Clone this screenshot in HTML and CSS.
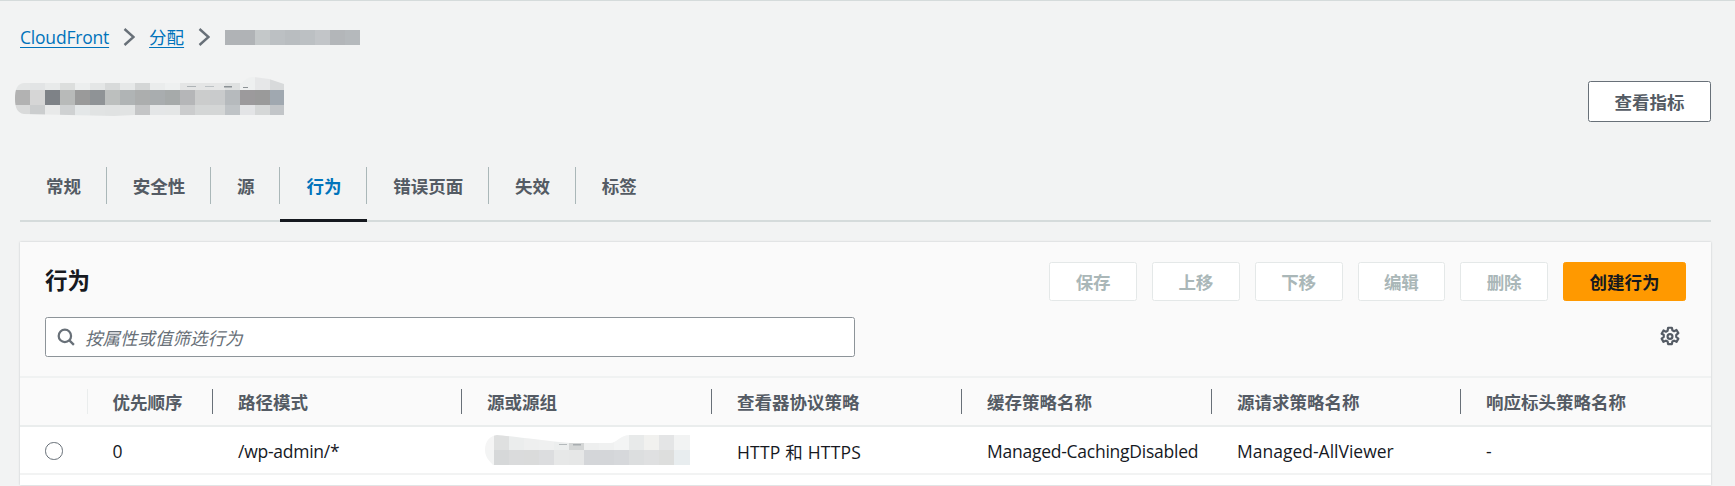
FILE: index.html
```html
<!DOCTYPE html>
<html lang="zh">
<head>
<meta charset="utf-8">
<title>CloudFront 分配</title>
<link rel="stylesheet" href="styles.css">
</head>
<body>
<main class="page">
  <nav class="crumbs">
    <a class="crumb-link crumb-latin" href="#">CloudFront</a>
    <svg class="crumb-sep" viewBox="0 0 12 18"><path d="M1.5 1l9 8-9 8"/></svg>
    <a class="crumb-link" href="#">分配</a>
    <svg class="crumb-sep" viewBox="0 0 12 18"><path d="M1.5 1l9 8-9 8"/></svg>
    <svg class="crumb-mosaic" width="135" height="15" viewBox="0 0 135 15">
      <rect width="15" height="15" x="0" fill="#b0b3b6"/><rect width="15" height="15" x="15" fill="#b0b3b6"/><rect width="15" height="15" x="30" fill="#c4c8c9"/><rect width="15" height="15" x="45" fill="#bcc0c3"/><rect width="15" height="15" x="60" fill="#b9bdc0"/><rect width="15" height="15" x="75" fill="#bcc0c3"/><rect width="15" height="15" x="90" fill="#c2c5c8"/><rect width="15" height="15" x="105" fill="#b3b6b9"/><rect width="15" height="15" x="120" fill="#b5b9bc"/>
    </svg>
  </nav>

  <header class="page-head">
    <svg class="title-mosaic" width="272" height="41" viewBox="0 0 272 41">
      <defs><clipPath id="tm"><path d="M10 6H228C232 1 236 0 240 0L255 2 270 7V38H120L100 39 10 37C3 36 1 30 1 22 1 12 3 7 10 6z"/></clipPath></defs>
      <g clip-path="url(#tm)">
        <g><rect x="1" width="15" height="13" y="0" fill="#e4e6e6"/><rect x="16" width="15" height="13" y="0" fill="#e2e4e5"/><rect x="31" width="15" height="13" y="0" fill="#e8eaea"/><rect x="46" width="15" height="13" y="0" fill="#dcdedd"/><rect x="61" width="15" height="13" y="0" fill="#eceeee"/><rect x="76" width="15" height="13" y="0" fill="#e4e6e6"/><rect x="91" width="15" height="13" y="0" fill="#d8dada"/><rect x="106" width="15" height="13" y="0" fill="#e6e8e8"/><rect x="121" width="15" height="13" y="0" fill="#d4d6d6"/><rect x="136" width="15" height="13" y="0" fill="#eaecec"/><rect x="151" width="15" height="13" y="0" fill="#eef0f0"/><rect x="166" width="15" height="13" y="0" fill="#e4e5e5"/><rect x="181" width="15" height="13" y="0" fill="#e4e5e5"/><rect x="196" width="15" height="13" y="0" fill="#e6e7e7"/><rect x="211" width="15" height="13" y="0" fill="#dfe1e1"/><rect x="226" width="15" height="13" y="0" fill="#eef0f0"/><rect x="241" width="15" height="13" y="0" fill="#e6e7e8"/><rect x="256" width="15" height="13" y="0" fill="#d8dadb"/></g>
        <g><rect x="1" width="15" height="15" y="13" fill="#b2b2b2"/><rect x="16" width="15" height="15" y="13" fill="#d6d6d6"/><rect x="31" width="15" height="15" y="13" fill="#7e8287"/><rect x="46" width="15" height="15" y="13" fill="#b8bab9"/><rect x="61" width="15" height="15" y="13" fill="#9a9a9a"/><rect x="76" width="15" height="15" y="13" fill="#8f9396"/><rect x="91" width="15" height="15" y="13" fill="#bcbfbe"/><rect x="106" width="15" height="15" y="13" fill="#b0b4b5"/><rect x="121" width="15" height="15" y="13" fill="#acaeae"/><rect x="136" width="15" height="15" y="13" fill="#a9adaf"/><rect x="151" width="15" height="15" y="13" fill="#a6aaaa"/><rect x="166" width="15" height="15" y="13" fill="#b5b6b8"/><rect x="181" width="15" height="15" y="13" fill="#cbcccc"/><rect x="196" width="15" height="15" y="13" fill="#c9cbcc"/><rect x="211" width="15" height="15" y="13" fill="#b6babd"/><rect x="226" width="15" height="15" y="13" fill="#9c9a9c"/><rect x="241" width="15" height="15" y="13" fill="#9a9a9a"/><rect x="256" width="15" height="15" y="13" fill="#a0a8b0"/></g>
        <g><rect x="1" width="15" height="13" y="28" fill="#d9dada"/><rect x="16" width="15" height="13" y="28" fill="#cbcdce"/><rect x="31" width="15" height="13" y="28" fill="#e8e9e9"/><rect x="46" width="15" height="13" y="28" fill="#cfd1d2"/><rect x="61" width="15" height="13" y="28" fill="#e4e7e8"/><rect x="76" width="15" height="13" y="28" fill="#e1e3e3"/><rect x="91" width="15" height="13" y="28" fill="#e0e2e2"/><rect x="106" width="15" height="13" y="28" fill="#e1e3e3"/><rect x="121" width="15" height="13" y="28" fill="#c4c5c6"/><rect x="136" width="15" height="13" y="28" fill="#e4e6e7"/><rect x="151" width="15" height="13" y="28" fill="#e4e6e6"/><rect x="166" width="15" height="13" y="28" fill="#cbcccd"/><rect x="181" width="15" height="13" y="28" fill="#d4d6d6"/><rect x="196" width="15" height="13" y="28" fill="#d4d6d6"/><rect x="211" width="15" height="13" y="28" fill="#bfc3c6"/><rect x="226" width="15" height="13" y="28" fill="#e3e4e6"/><rect x="241" width="15" height="13" y="28" fill="#d5d7d7"/><rect x="256" width="15" height="13" y="28" fill="#c2c5c8"/></g>
        <g><rect x="173" y="9" width="9" height="1" fill="#aeb3b6"/><rect x="191" y="9" width="9" height="1" fill="#bcc1c4"/><rect x="210" y="9" width="8" height="1.5" fill="#8c9296"/><rect x="229" y="10" width="5" height="1" fill="#8c9296"/></g>
      </g>
    </svg>
    <button class="btn btn-normal" type="button">查看指标</button>
  </header>

  <div class="tabs">
    <a class="tab" href="#"><span class="tab-label">常规</span></a>
    <a class="tab" href="#"><span class="tab-label">安全性</span></a>
    <a class="tab" href="#"><span class="tab-label">源</span></a>
    <a class="tab tab-active" href="#"><span class="tab-label">行为</span></a>
    <a class="tab" href="#"><span class="tab-label">错误页面</span></a>
    <a class="tab" href="#"><span class="tab-label">失效</span></a>
    <a class="tab tab-last" href="#"><span class="tab-label">标签</span></a>
  </div>

  <section class="card">
    <div class="card-head">
      <div class="card-top">
        <h2 class="card-title">行为</h2>
        <div class="actions">
          <button class="btn btn-disabled" type="button">保存</button>
          <button class="btn btn-disabled" type="button">上移</button>
          <button class="btn btn-disabled" type="button">下移</button>
          <button class="btn btn-disabled" type="button">编辑</button>
          <button class="btn btn-disabled" type="button">删除</button>
          <button class="btn btn-primary" type="button">创建行为</button>
        </div>
      </div>
      <div class="tools">
        <label class="filter">
          <svg class="search-icon" viewBox="0 0 16 16"><circle cx="7" cy="7" r="5.5"/><path d="M11 11l4 4"/></svg>
          <input class="filter-input" type="text" placeholder="按属性或值筛选行为">
        </label>
        <svg class="gear" viewBox="0 0 20 20"><path class="gear-body" d="M8.3 1.6h3.4l.5 2.3 1.5.8 2.2-1.1 1.7 2.9-1.9 1.5v2l1.9 1.5-1.7 2.9-2.2-1.1-1.5.8-.5 2.3H8.3l-.5-2.3-1.5-.8-2.2 1.1-1.7-2.9 1.9-1.5v-2L2.4 7l1.7-2.9 2.2 1.1 1.5-.8z"/><circle class="gear-body" cx="10" cy="9.5" r="2.2"/></svg>
      </div>
    </div>
    <table class="grid">
      <colgroup><col class="c-sel"><col class="c-pri"><col class="c-wide"><col class="c-wide2"><col class="c-wide2"><col class="c-wide2"><col class="c-wide"><col></colgroup>
      <thead>
        <tr>
          <th class="th-sel"><span class="th-inner"></span></th>
          <th><span class="th-inner">优先顺序</span></th>
          <th><span class="th-inner">路径模式</span></th>
          <th><span class="th-inner">源或源组</span></th>
          <th><span class="th-inner">查看器协议策略</span></th>
          <th><span class="th-inner">缓存策略名称</span></th>
          <th><span class="th-inner">源请求策略名称</span></th>
          <th class="th-last"><span class="th-inner">响应标头策略名称</span></th>
        </tr>
      </thead>
      <tbody>
        <tr>
          <td class="td-sel"><span class="radio"></span></td>
          <td>0</td>
          <td class="tight">/wp-admin/*</td>
          <td>
            <svg class="cell-mosaic" width="205" height="30" viewBox="0 0 205 30">
              <defs><clipPath id="cm"><path d="M12 0C25 1 60 6 85 8H125C132 8 135 0 145 0H205V30H8C2 24 0 20 0 15 0 6 5 1 12 0z"/></clipPath></defs>
              <g clip-path="url(#cm)">
                <rect x="0" y="0" width="9" height="15" fill="#f5f5f5"/><rect x="9" y="0" width="15" height="15" fill="#dfe0e0"/><rect x="24" y="0" width="15" height="15" fill="#ebeded"/><rect x="39" y="0" width="15" height="15" fill="#eeefef"/><rect x="54" y="0" width="15" height="15" fill="#eff0f0"/><rect x="69" y="0" width="15" height="15" fill="#eceeee"/><rect x="84" y="0" width="15" height="15" fill="#d4d6d6"/><rect x="99" y="0" width="15" height="15" fill="#eeefef"/><rect x="114" y="0" width="15" height="15" fill="#f0f1f1"/><rect x="129" y="0" width="15" height="15" fill="#f3f4f4"/><rect x="144" y="0" width="15" height="15" fill="#e8eaea"/><rect x="159" y="0" width="15" height="15" fill="#f1f1ef"/><rect x="174" y="0" width="15" height="15" fill="#e4e5e6"/><rect x="189" y="0" width="16" height="15" fill="#f2f3f3"/>
                <rect x="0" y="15" width="9" height="15" fill="#f3f4f4"/><rect x="9" y="15" width="15" height="15" fill="#d6d8d9"/><rect x="24" y="15" width="15" height="15" fill="#dadbdc"/><rect x="39" y="15" width="15" height="15" fill="#dadbdb"/><rect x="54" y="15" width="15" height="15" fill="#dcdddf"/><rect x="69" y="15" width="15" height="15" fill="#e7e8e8"/><rect x="84" y="15" width="15" height="15" fill="#e6e7e7"/><rect x="99" y="15" width="15" height="15" fill="#d4d6d9"/><rect x="114" y="15" width="15" height="15" fill="#d4d6d9"/><rect x="129" y="15" width="15" height="15" fill="#d6d8db"/><rect x="144" y="15" width="15" height="15" fill="#dcdedf"/><rect x="159" y="15" width="15" height="15" fill="#dfe0e1"/><rect x="174" y="15" width="15" height="15" fill="#dddedd"/><rect x="189" y="15" width="16" height="15" fill="#e8edef"/>
                <rect x="74" y="9" width="8" height="1" fill="#b4b9bb"/><rect x="88" y="9" width="8" height="1.5" fill="#a8adb0"/>
              </g>
            </svg>
          </td>
          <td class="wide">HTTP 和 HTTPS</td>
          <td class="tight">Managed-CachingDisabled</td>
          <td>Managed-AllViewer</td>
          <td>-</td>
        </tr>
      </tbody>
    </table>
  </section>
</main>
</body>
</html>
```
FILE: styles.css
```css
* { box-sizing: border-box; }
html, body { margin: 0; height: 486px; overflow: hidden; }
body {
  background: #f2f3f3;
  color: #16191f;
  font-family: "Open Sans", "Noto Sans CJK SC", sans-serif;
  font-size: 17.5px;
  border-top: 1px solid #d5dbdb;
}
.page { padding: 0 24px 0 20px; }

.crumbs { display: flex; align-items: center; height: 24px; margin-top: 24px; gap: 14px; }
.crumb-link { color: #0073bb; text-decoration: underline; text-decoration-thickness: 1px; text-underline-offset: 3px; line-height: 24px; }
.crumb-latin { letter-spacing: -.2px; }
.crumb-sep { width: 12px; height: 18px; }
.crumb-sep path { fill: none; stroke: #687078; stroke-width: 2.4; }
.crumb-mosaic { margin-left: 1px; }

.page-head { display: flex; justify-content: space-between; align-items: center; height: 41px; margin-top: 32px; }
.title-mosaic { margin-left: -6px; margin-bottom: 8px; }

.btn {
  font-family: "Noto Sans CJK SC", sans-serif;
  font-size: 17.5px;
  font-weight: 700;
  border-radius: 2.5px;
  padding: 0;
  height: 39px;
  line-height: 1;
}
.btn-normal { background: #fff; color: #545b64; border: 1.5px solid #687078; height: 41px; width: 123px; }
.btn-disabled { background: #fff; color: #aab7b8; border: 1.5px solid #e4e8e8; width: 87.75px; }
.btn-primary { background: #ff9900; color: #16191f; border: 1.5px solid #ff9900; width: 123px; }

.tabs { display: flex; height: 55px; margin-top: 45px; border-bottom: 2px solid #d5dbdb; }
.tab {
  position: relative;
  display: block;
  height: 53px;
  font-family: "Noto Sans CJK SC", sans-serif;
  font-weight: 700;
  color: #545b64;
  text-decoration: none;
}
.tab-label { display: flex; align-items: center; height: 37px; padding: 0 24.8px 0 26px; border-right: 1px solid #aab7b8; }
.tab-last .tab-label { border-right: 0; }
.tab-active { color: #0073bb; }
.tab-active::after { content: ""; position: absolute; left: 0; right: 0; bottom: -2px; height: 3px; background: #16191f; }

.card { margin-top: 20px; background: #fff; box-shadow: 0 0 2px rgba(0, 28, 36, .2); height: 243px; }
.card-head { background: #fafafa; padding: 20px 25px 19px 25px; }
.card-top { display: flex; justify-content: space-between; align-items: center; height: 39px; }
.card-title { margin: -5px 0 0; font-family: "Noto Sans CJK SC", sans-serif; font-size: 22.5px; font-weight: 700; color: #16191f; line-height: 36px; }
.actions { display: flex; gap: 15px; }

.tools { display: flex; justify-content: space-between; align-items: center; margin-top: 16px; padding-right: 5px; }
.filter { display: flex; align-items: center; gap: 10px; width: 810px; height: 40px; padding: 0 11px; background: #fff; border: 1.5px solid #8d9499; border-radius: 2.5px; }
.search-icon { width: 18px; height: 18px; flex: none; }
.search-icon circle, .search-icon path { fill: none; stroke: #687078; stroke-width: 2; }
.filter-input { flex: 1; border: 0; outline: 0; background: none; padding: 0; font-family: "Noto Sans CJK SC", sans-serif; font-size: 17.5px; font-style: italic; }
.filter-input::placeholder { color: #687078; opacity: 1; }
.gear { width: 22px; height: 22px; flex: none; }
.gear-body { fill: none; stroke: #545b64; stroke-width: 2; stroke-linejoin: round; }

.grid { width: 100%; border-collapse: collapse; table-layout: fixed; }
.c-sel { width: 67.5px; }
.c-pri { width: 125.5px; }
.c-wide { width: 249px; }
.c-wide2 { width: 250px; }
.grid th { height: 49px; padding: 0; background: #fafafa; border-top: 2px solid #f0f2f2; border-bottom: 2px solid #eaeded; text-align: left; font-family: "Noto Sans CJK SC", sans-serif; font-weight: 700; color: #545b64; }
.th-inner { display: flex; align-items: center; height: 25px; padding-left: 25px; border-right: 1px solid #687078; }
.th-sel .th-inner { border-right-color: #eaeded; }
.th-last .th-inner { border-right: 0; }
.grid td { height: 48px; padding: 2px 0 0 25px; border-bottom: 2px solid #f2f3f3; }
.tight { letter-spacing: -.25px; }
.wide { letter-spacing: .2px; }
.radio { display: block; width: 17.5px; height: 17.5px; border: 1.5px solid #687078; border-radius: 50%; background: #fff; }
.cell-mosaic { display: block; margin-left: -2px; margin-top: -2px; }
```
